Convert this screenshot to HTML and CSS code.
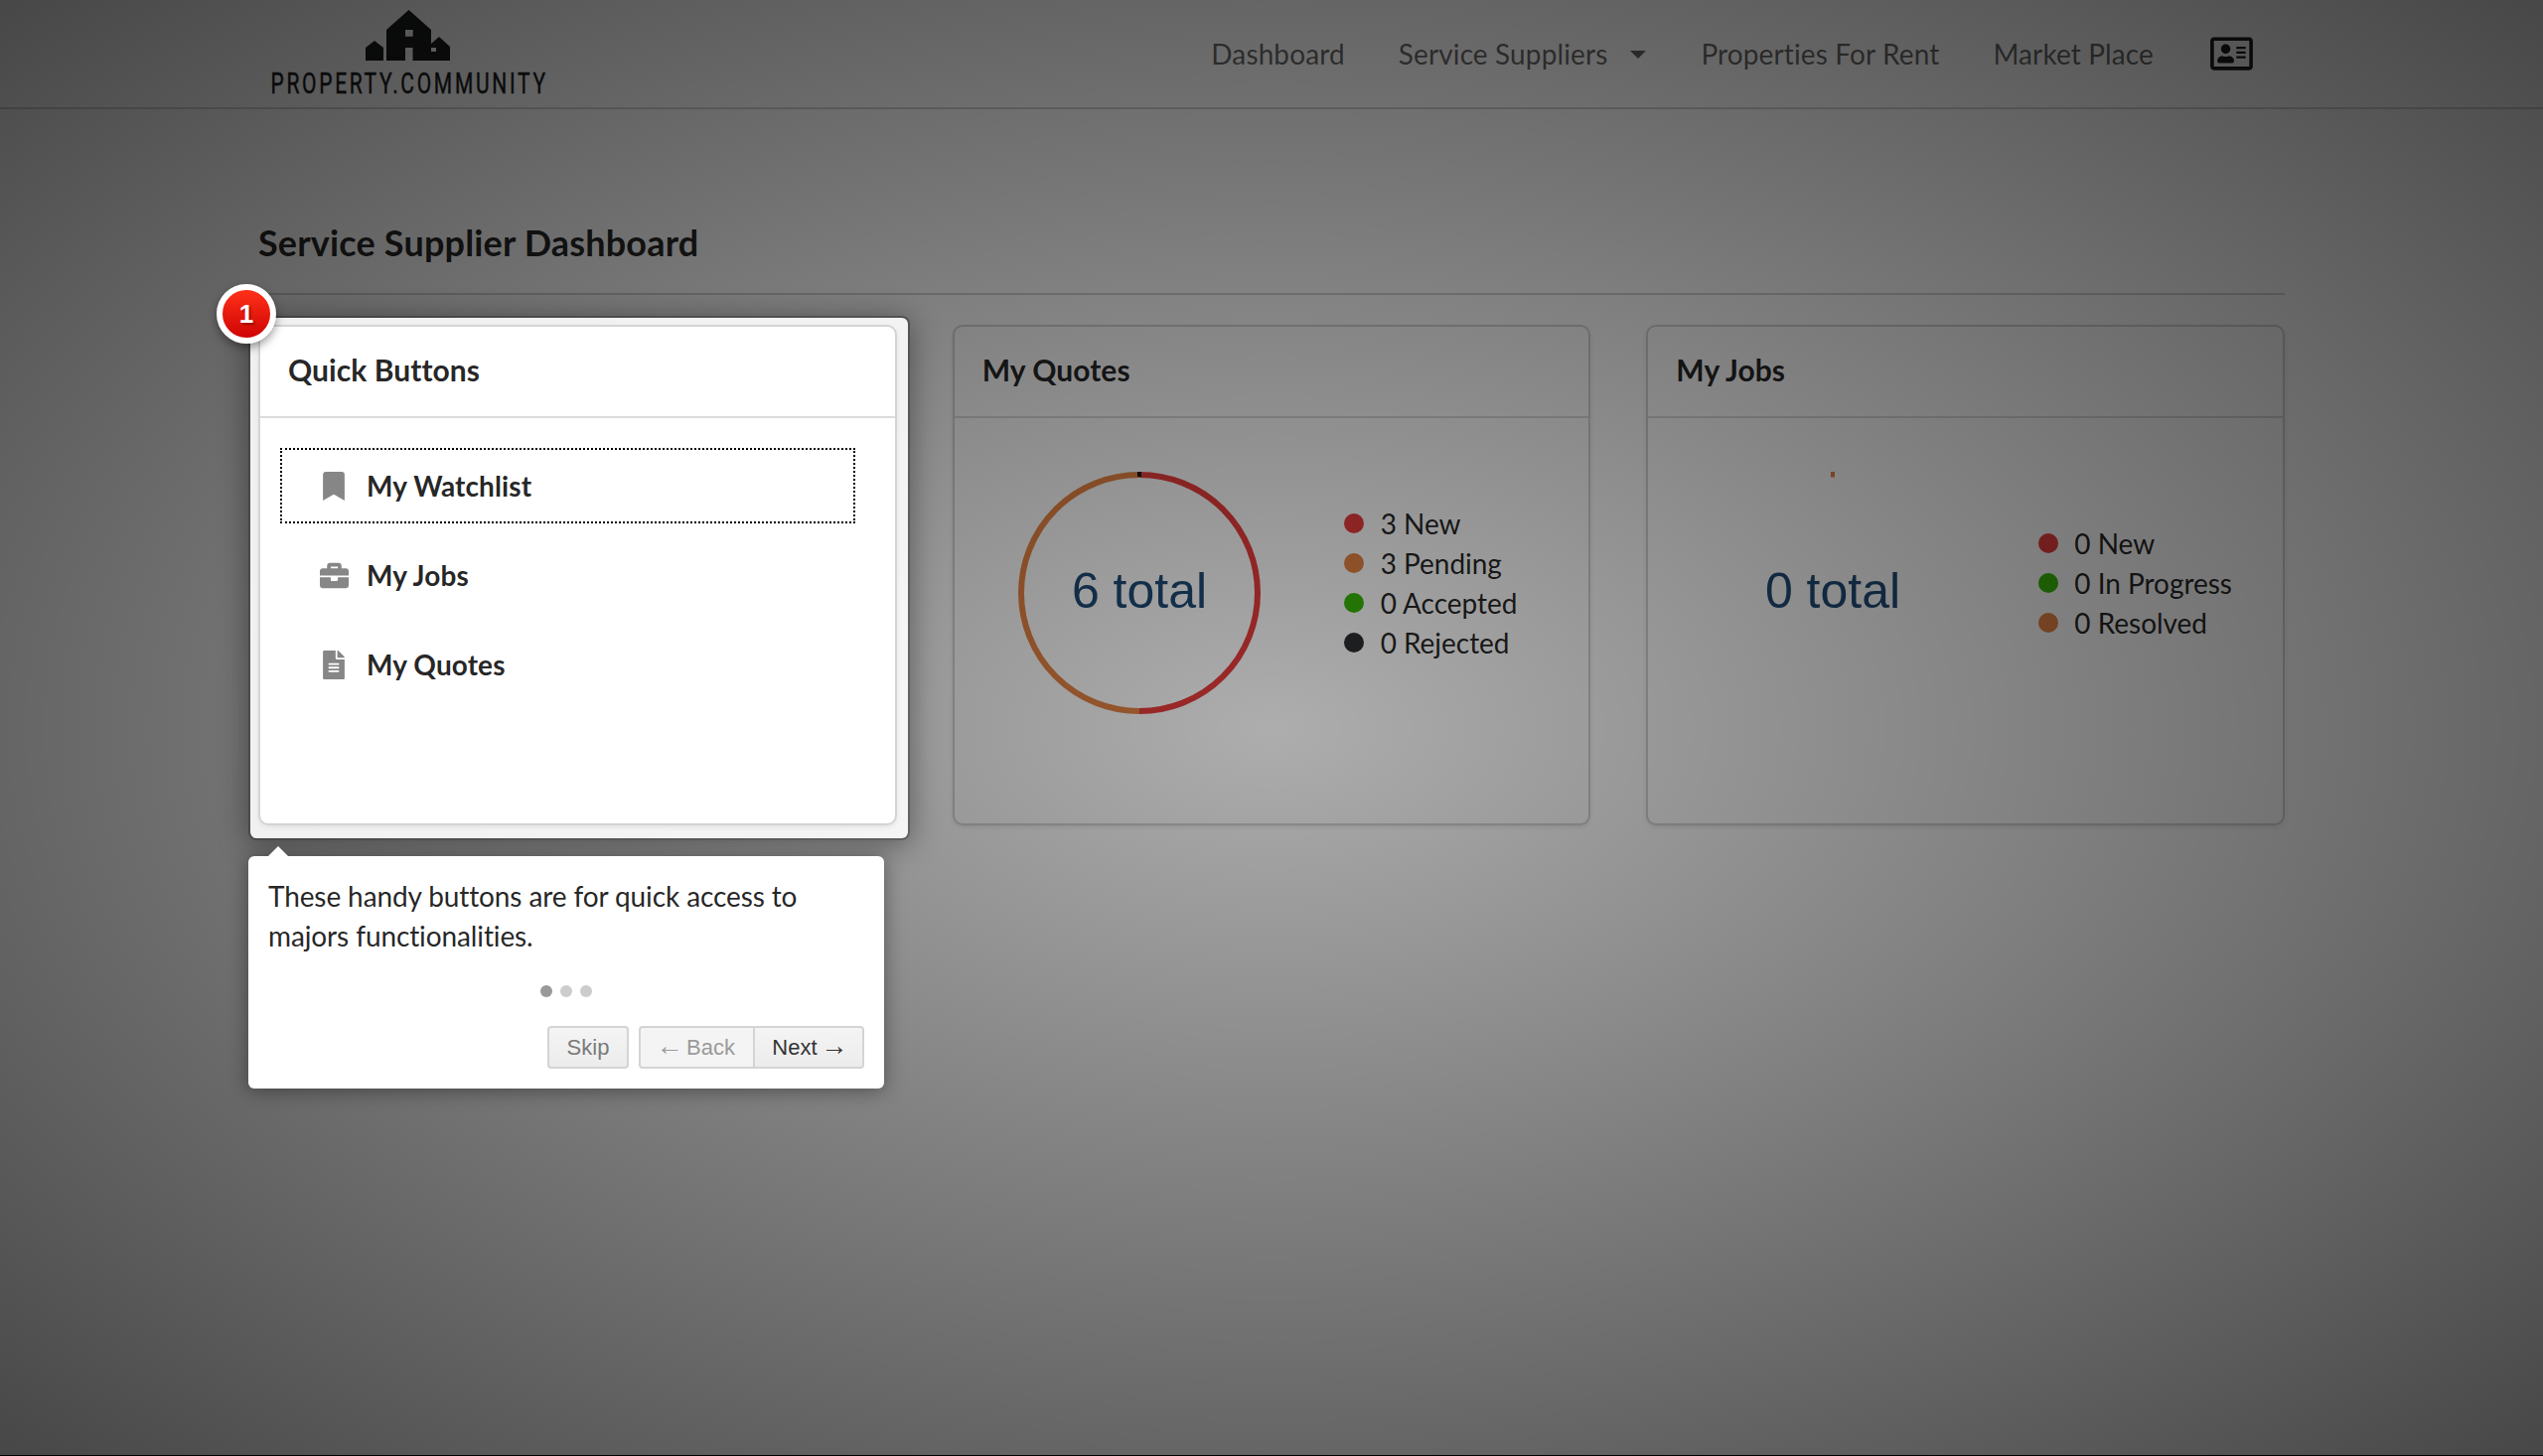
FILE: index.html
```html
<!DOCTYPE html>
<html lang="en">
<head>
<meta charset="utf-8">
<title>Service Supplier Dashboard</title>
<link rel="stylesheet" href="styles.css">
</head>
<body>
<header class="navbar">
  <a class="logo">
    <svg width="300" height="110" viewBox="0 0 300 110">
      <path fill="#1b1c1d" fill-rule="evenodd" d="M108 61V48l9-7 9 7v13zM129 61V30l22.500-20L174 30v14l8-7 11 10v14h-37.500V48H148v13zM148 30v6.700h7.700V30zM174 48v4h5v-4z"/>
      <text class="logo-text" transform="translate(12.500 94.300) scale(.7 1)" textLength="395">PROPERTY.COMMUNITY</text>
    </svg>
  </a>
  <nav class="menu">
    <a>Dashboard</a>
    <a class="dropdown">Service Suppliers <i class="caret"></i></a>
    <a>Properties For Rent</a>
    <a>Market Place</a>
    <a class="profile"><svg width="43" height="38" viewBox="0 0 576 512"><path fill="#1b1c1d" d="M528 32H48C21.500 32 0 53.500 0 80v352c0 26.500 21.500 48 48 48h480c26.500 0 48-21.500 48-48V80c0-26.500-21.500-48-48-48zm0 400H48V80h480v352zM208 256c35.300 0 64-28.700 64-64s-28.700-64-64-64-64 28.700-64 64 28.700 64 64 64zm-89.600 128h179.200c12.400 0 22.400-8.600 22.400-19.200v-19.200c0-31.800-30.100-57.600-67.200-57.600-10.800 0-18.700 8-44.800 8-26.900 0-33.400-8-44.800-8-37.100 0-67.200 25.800-67.200 57.600v19.200c0 10.600 10 19.200 22.400 19.200zM360 320h112c4.400 0 8-3.600 8-8v-16c0-4.400-3.600-8-8-8H360c-4.400 0-8 3.600-8 8v16c0 4.400 3.600 8 8 8zm0-64h112c4.400 0 8-3.600 8-8v-16c0-4.400-3.600-8-8-8H360c-4.400 0-8 3.600-8 8v16c0 4.400 3.600 8 8 8zm0-64h112c4.400 0 8-3.600 8-8v-16c0-4.400-3.600-8-8-8H360c-4.400 0-8 3.600-8 8v16c0 4.400 3.600 8 8 8z"/></svg></a>
  </nav>
</header>

<main class="page">
  <h1 class="title">Service Supplier Dashboard</h1>
  <div class="cards">
    <section class="card highlighted">
      <h2 class="card-title">Quick Buttons</h2>
      <div class="quick">
        <a class="quick-item focused"><svg class="icon" width="22" height="29" viewBox="0 0 384 512"><path d="M0 512V48C0 21.500 21.500 0 48 0h288c26.500 0 48 21.500 48 48v464L192 400 0 512z"/></svg>My Watchlist</a>
        <a class="quick-item"><svg class="icon" width="29" height="29" viewBox="0 0 512 512"><path d="M320 336c0 8.800-7.200 16-16 16h-96c-8.800 0-16-7.200-16-16v-48H0v144c0 25.600 22.400 48 48 48h416c25.600 0 48-22.400 48-48V288H320v48zm144-208h-80V80c0-25.600-22.400-48-48-48H176c-25.600 0-48 22.400-48 48v48H48c-25.600 0-48 22.400-48 48v80h512v-80c0-25.600-22.400-48-48-48zm-144 0H192V96h128v32z"/></svg>My Jobs</a>
        <a class="quick-item"><svg class="icon" width="22" height="29" viewBox="0 0 384 512"><path d="M224 136V0H24C10.700 0 0 10.700 0 24v464c0 13.300 10.700 24 24 24h336c13.300 0 24-10.700 24-24V160H248c-13.200 0-24-10.800-24-24zm64 236c0 6.600-5.400 12-12 12H108c-6.600 0-12-5.400-12-12v-8c0-6.600 5.400-12 12-12h168c6.600 0 12 5.400 12 12v8zm0-64c0 6.600-5.400 12-12 12H108c-6.600 0-12-5.400-12-12v-8c0-6.600 5.400-12 12-12h168c6.600 0 12 5.400 12 12v8zm0-72v8c0 6.600-5.400 12-12 12H108c-6.600 0-12-5.400-12-12v-8c0-6.600 5.400-12 12-12h168c6.600 0 12 5.400 12 12zm96-114.100v6.100H256V0h6.100c6.400 0 12.500 2.500 17 7l97.900 98c4.500 4.500 7 10.600 7 16.900z"/></svg>My Quotes</a>
      </div>
    </section>

    <section class="card">
      <h2 class="card-title">My Quotes</h2>
      <div class="stats">
        <svg class="donut" width="244" height="244" viewBox="0 0 244 244">
          <path class="arc red" d="M122 3a119 119 0 0 1 0 238"/>
          <path class="arc orange" d="M122 241a119 119 0 0 1 0-238"/>
          <path fill="#1b1c1d" d="M120 0h4v5h-4z"/>
          <text class="total" x="122" y="136.500">6 total</text>
        </svg>
        <ul class="legend">
          <li><i class="dot red"></i>3 New</li>
          <li><i class="dot orange"></i>3 Pending</li>
          <li><i class="dot green"></i>0 Accepted</li>
          <li><i class="dot black"></i>0 Rejected</li>
        </ul>
      </div>
    </section>

    <section class="card">
      <h2 class="card-title">My Jobs</h2>
      <div class="stats">
        <svg class="donut" width="244" height="244" viewBox="0 0 244 244">
          <path class="mark" d="M120 0h4v5.500h-4z"/>
          <text class="total" x="122" y="136.500">0 total</text>
        </svg>
        <ul class="legend">
          <li><i class="dot red"></i>0 New</li>
          <li><i class="dot green"></i>0 In Progress</li>
          <li><i class="dot orange"></i>0 Resolved</li>
        </ul>
      </div>
    </section>
  </div>
</main>

<div class="overlay"></div>
<div class="helper-layer"></div>
<span class="step-number">1</span>
<div class="tooltip">
  <p class="tooltip-text">These handy buttons are for quick access to majors functionalities.</p>
  <div class="bullets"><i class="active"></i><i></i><i></i></div>
  <div class="buttons">
    <a class="button skip">Skip</a>
    <div class="group"><a class="button back disabled"><span class="arrow">←</span> Back</a><a class="button next">Next <span class="arrow">→</span></a></div>
  </div>
</div>
</body>
</html>
```
FILE: styles.css
```css
* { box-sizing: border-box; }
body {
  position: relative;
  margin: 0;
  height: 1466px;
  overflow: hidden;
  background: #fff;
  border-bottom: 1px solid #000;
  font: 28px/40px Lato, "Liberation Sans", sans-serif;
  font-variant-ligatures: none;
  color: rgba(0, 0, 0, .87);
}
h1, h2, p, ul { margin: 0; padding: 0; }
svg { display: block; }

/* Navigation */
.navbar {
  display: flex;
  justify-content: space-between;
  height: 110px;
  padding: 0 292px 0 260px;
  border-bottom: 2px solid #d4d4d5;
}
.logo { display: block; height: 108px; overflow: hidden; }
.logo-text {
  font: 30px Roboto, sans-serif;
  fill: #1b1c1d;
  stroke: #1b1c1d;
  stroke-width: .5;
}
.menu {
  display: flex;
  align-items: center;
  gap: 54px;
  height: 108px;
  color: rgba(0, 0, 0, .6);
  letter-spacing: .12px;
}
.dropdown { display: flex; align-items: center; }
.caret {
  margin: 2px 1px 0 23px;
  border: 8px solid transparent;
  border-top-color: rgba(0, 0, 0, .6);
  border-bottom: 0;
}
.profile { margin-left: 3px; }

/* Page and cards */
.page { padding: 110px 260px 0; }
.title {
  height: 77px;
  padding-top: 4px;
  border-bottom: 2px solid #d4d4d5;
  font-size: 36px;
  line-height: 40px;
  letter-spacing: .17px;
}
.cards {
  display: grid;
  grid-template-columns: repeat(3, 1fr);
  gap: 60px;
  padding: 32px 2px 0;
}
.card {
  height: 500px;
  border-radius: 8px;
  background: #fff;
  box-shadow: 0 2px 6px 0 #d4d4d5, 0 0 0 2px #d4d4d5;
}
.highlighted { position: relative; z-index: 3; }
.card-title {
  height: 92px;
  padding: 23px 28px 0;
  border-bottom: 2px solid #dcdcdd;
  font-size: 30px;
  line-height: 40px;
  letter-spacing: .05px;
}
.quick {
  display: grid;
  gap: 14px;
  padding: 30px 40px 0 20px;
}
.quick-item {
  display: grid;
  grid-template-columns: 30px 1fr;
  align-items: center;
  gap: 18px;
  height: 76px;
  padding-left: 37px;
  border: 2px solid transparent;
  font-weight: 700;
  letter-spacing: .1px;
}
.focused { border: 2px dotted #000; }
.icon { justify-self: center; fill: #868686; }

.stats {
  display: flex;
  align-items: center;
  padding: 54px 0 0 64px;
}
.donut { flex: none; }
.arc { fill: none; stroke-width: 6; }
.arc.red { stroke: #e83d3c; }
.arc.orange { stroke: #e58344; }
.mark { fill: #e58344; }
.total {
  font: 50px "Liberation Sans", Arial, sans-serif;
  fill: #1f4a75;
  text-anchor: middle;
}
.legend { margin: -21px 0 0 84.500px; list-style: none; }
.legend li { display: flex; align-items: center; gap: 16.500px; letter-spacing: -.03px; }
.dot { width: 20px; height: 20px; border-radius: 50%; }
.dot.red { background: #e83d3c; }
.dot.orange { background: #e58344; }
.dot.green { background: #38b808; }
.dot.black { background: #2d2e30; }

/* Guided tour */
.overlay {
  position: absolute;
  inset: 0;
  z-index: 1;
  background: radial-gradient(ellipse farthest-corner, rgba(0, 0, 0, .4) 0, rgba(0, 0, 0, .9) 100%);
  opacity: .8;
}
.helper-layer {
  position: absolute;
  z-index: 2;
  left: 250px;
  top: 318px;
  width: 666px;
  height: 528px;
  border: 2px solid rgba(0, 0, 0, .35);
  border-radius: 8px;
  background: rgba(255, 255, 255, .9);
  background-clip: padding-box;
  box-shadow: 0 4px 30px rgba(0, 0, 0, .4);
}
.step-number {
  position: absolute;
  z-index: 4;
  left: 218px;
  top: 286px;
  width: 60px;
  height: 60px;
  border: 6px solid #fff;
  border-radius: 50%;
  background: linear-gradient(#ff3019, #cf0404);
  box-shadow: 0 4px 10px rgba(0, 0, 0, .4);
  font: bold 26px/48px "Liberation Sans", Arial, sans-serif;
  color: #fff;
  text-align: center;
  text-shadow: 2px 2px 2px rgba(0, 0, 0, .3);
}
.tooltip {
  position: absolute;
  z-index: 4;
  left: 250px;
  top: 862px;
  width: 640px;
  height: 234px;
  padding: 20px;
  border-radius: 6px;
  background: #fff;
  box-shadow: 0 2px 20px rgba(0, 0, 0, .4);
}
.tooltip::before {
  content: "";
  position: absolute;
  left: 20px;
  top: -10px;
  border: 10px solid transparent;
  border-top: 0;
  border-bottom-color: #fff;
}
.tooltip-text { letter-spacing: -.11px; }
.bullets {
  display: flex;
  justify-content: center;
  gap: 8px;
  padding: 30px 0 29px;
}
.bullets i { width: 12px; height: 12px; border-radius: 50%; background: #ccc; }
.bullets .active { background: #999; }
.buttons {
  display: flex;
  justify-content: flex-end;
  gap: 10px;
  font: 22px/39px "Liberation Sans", Arial, sans-serif;
}
.group { display: flex; }
.button {
  height: 43px;
  border: 2px solid #d4d4d4;
  border-radius: 4px;
  background: linear-gradient(#f4f4f4, #ececec);
  color: #333;
  text-align: center;
}
.skip { width: 82px; color: #7a7a7a; }
.back { width: 115px; border-right: 0; border-radius: 4px 0 0 4px; }
.next { width: 112px; border-radius: 0 4px 4px 0; }
.disabled { background: #f4f4f4; color: #9a9a9a; }
.arrow { margin: 0 -2.500px; font-size: 27px; line-height: 0; }
```
